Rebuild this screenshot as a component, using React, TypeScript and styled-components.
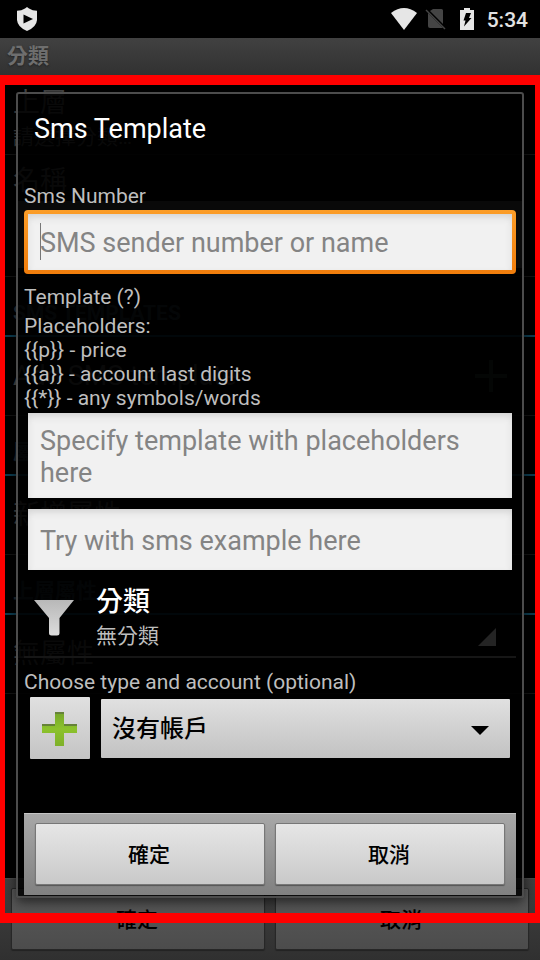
import React from "react";
import styled, { createGlobalStyle } from "styled-components";

const GlobalStyle = createGlobalStyle`
  *, *::before, *::after { box-sizing: border-box; }
  body { margin: 0; background: #000; }
  body, button, input, textarea, select {
    font-family: Roboto, "Noto Sans CJK TC", sans-serif;
  }
  h1, h2, p { margin: 0; font-weight: 400; }
`;

const Screen = styled.div`
  position: relative;
  display: flex;
  flex-direction: column;
  min-height: 100vh;
  background: #000;
  overflow: hidden;
`;

const StatusBar = styled.header`
  display: flex;
  align-items: center;
  height: 38px;
  padding: 0 12px 0 16px;
`;

const StatusIcons = styled.div`
  display: flex;
  align-items: center;
  gap: 8px;
  margin-left: auto;
`;

const Clock = styled.time`
  padding-top: 2px;
  font-size: 21px;
  line-height: 24px;
  font-weight: 500;
  color: #e2e2e2;
`;

const AppBar = styled.div`
  height: 40px;
  padding: 6px 7px;
  background: linear-gradient(#414141, #303030);
  color: #6e6e6e;
  font-size: 21px;
  line-height: 24px;
  font-weight: 700;
  text-shadow: 0 1px 2px #222;
`;

const Backdrop = styled.main`
  display: flex;
  flex-direction: column;
  flex: 1;
  padding: 5px 5px 0;
`;

const BackRow = styled.div<{ $height: number; $accent?: boolean }>`
  display: flex;
  flex-direction: column;
  justify-content: ${(p) => (p.$accent ? "flex-end" : "center")};
  height: ${(p) => p.$height}px;
  padding: 0 8px ${(p) => (p.$accent ? 4 : 0)}px;
  border-bottom: ${(p) => (p.$accent ? "2px solid #0c3c50" : "1px solid #141414")};
`;

const BackText = styled.span<{ $small?: boolean; $tone?: string }>`
  font-size: ${(p) => (p.$small ? 21 : 27)}px;
  line-height: ${(p) => (p.$small ? 32 : 36)}px;
  color: ${(p) => p.$tone ?? "#484848"};
`;

const BackHeading = styled(BackText)`
  font-size: 21px;
  font-weight: 700;
`;

const BackLine = styled.div`
  display: flex;
  align-items: center;
  justify-content: space-between;
  padding-right: 20px;
`;

const BackField = styled.div`
  height: 67px;
  margin: 2px 5px 0;
  background: #4a4a4a;
`;

const ButtonBar = styled.footer<{ $dim?: boolean }>`
  display: flex;
  gap: 10px;
  height: 82px;
  padding: 9px 11px 10px;
  border-top: 1px solid ${(p) => (p.$dim ? "#4a4a4a" : "#c4c4c4")};
  background: ${(p) =>
    p.$dim ? "linear-gradient(#414141, #303030)" : "linear-gradient(#a8a8a8, #808080)"};
`;

const BarButton = styled.button<{ $dim?: boolean }>`
  flex: 1;
  padding: 2px 2px 0 0;
  border: 1px solid ${(p) => (p.$dim ? "#272727" : "#777")};
  border-radius: 2px;
  background: ${(p) =>
    p.$dim ? "linear-gradient(#5a5a5a, #4c4c4c)" : "linear-gradient(#e6e6e6, #c9c9c9)"};
  box-shadow: 0 1px 1px ${(p) => (p.$dim ? "#222" : "#555")};
  color: #000;
  font-size: 21px;
  line-height: 24px;
  font-weight: 500;
`;

const Dialog = styled.section`
  position: absolute;
  top: 92px;
  left: 16px;
  right: 16px;
  padding: 0 6px 1px;
  border: 2px solid #4c4c4c;
  border-radius: 3px;
  background: rgba(0, 0, 0, 0.88);
  box-shadow: 0 4px 12px rgba(0, 0, 0, 0.6);
`;

const DialogTitle = styled.h1`
  padding: 19px 10px 39px;
  color: #fff;
  font-size: 27px;
  line-height: 32px;
`;

const Form = styled.form`
  display: flex;
  flex-direction: column;
`;

const FieldLabel = styled.label`
  color: #bebebe;
  font-size: 21px;
  line-height: 24px;
`;

const Hint = styled.p`
  margin: 5px 0 3px;
  color: #bebebe;
  font-size: 21px;
  line-height: 24px;
`;

const fieldFace = `
  display: block;
  border: 0;
  border-radius: 0;
  outline: 0;
  background-color: #f1f1f1;
  box-shadow: inset 0 4px 8px -2px #ccc;
  color: #000;
  font-size: 27px;
  line-height: 32px;
  &::placeholder { color: #848484; opacity: 1; }
`;

const FocusRing = styled.div`
  margin: 2px 0 11px;
  padding: 4px;
  border-radius: 4px;
  background: linear-gradient(#fb9d28, #f07d0c);
`;

const TextInput = styled.input<{ $focused?: boolean }>`
  ${fieldFace}
  width: 100%;
  height: 56px;
  padding: 2px 12px 0;
  ${(p) =>
    p.$focused &&
    `background-image: linear-gradient(#777, #777);
     background-repeat: no-repeat;
     background-size: 1px 37px;
     background-position: 12px 9px;`}
`;

const FieldGroup = styled.div`
  display: flex;
  flex-direction: column;
  gap: 11px;
  margin: 0 4px;
`;

const TextArea = styled.textarea`
  ${fieldFace}
  width: 100%;
  height: 85px;
  padding: 12px;
  resize: none;
  overflow: hidden;
`;

const SampleInput = styled(TextInput)`
  height: 61px;
`;

const CategoryRow = styled.button`
  display: flex;
  align-items: center;
  height: 88px;
  margin-bottom: 12px;
  padding: 10px 20px 0 8px;
  border: 0;
  border-bottom: 2px solid #161616;
  background: none;
  text-align: left;
`;

const CategoryText = styled.span`
  display: flex;
  flex: 1;
  flex-direction: column;
  margin-left: 20px;
`;

const CategoryName = styled.span`
  color: #fff;
  font-size: 27px;
  line-height: 36px;
  font-weight: 500;
`;

const CategoryValue = styled.span`
  color: #bebebe;
  font-size: 21px;
  line-height: 32px;
`;

const CornerMark = styled.svg`
  align-self: flex-end;
  margin-bottom: 10px;
`;

const AccountRow = styled.div`
  display: flex;
  align-items: center;
  gap: 11px;
  margin: 3px 6px 54px;
`;

const AddButton = styled.button`
  display: grid;
  place-items: center;
  width: 60px;
  height: 62px;
  padding: 2px 0 0;
  border: 0;
  border-radius: 1px;
  background: linear-gradient(#e0e0e0, #c4c4c4);
`;

const SelectBox = styled.div`
  position: relative;
  flex: 1;
`;

const AccountSelect = styled.select`
  display: block;
  width: 100%;
  height: 59px;
  padding: 2px 50px 0 11px;
  border: 0;
  border-radius: 1px;
  outline: 0;
  appearance: none;
  background: linear-gradient(#e0e0e0, #c2c2c2);
  color: #000;
  font-size: 24px;
  font-weight: 500;
`;

const SelectArrow = styled.svg`
  position: absolute;
  top: 27px;
  right: 21px;
  pointer-events: none;
`;

const Highlight = styled.div`
  position: absolute;
  top: 75px;
  left: 0;
  right: 0;
  bottom: 37px;
  border: solid #f00;
  border-width: 10px 5px;
  pointer-events: none;
`;

const ShieldIcon = () => (
  <svg width="22" height="26" viewBox="0 0 22 26" aria-hidden="true">
    <path d="M11 1 L13 2.4 Q16.500 4.500 21 4.800 V14 Q20.500 21 11 25 Q1.500 21 1 14 V4.800 Q5.500 4.500 9 2.400Z" fill="#e6e6e6" />
    <path d="M7.500 8.500 L17 13 L7.500 17.500Z" fill="#000" />
  </svg>
);

const WifiIcon = () => (
  <svg width="26" height="22" viewBox="0 0 26 22" aria-hidden="true">
    <path d="M0 5 Q13 -5 26 5 L13 22Z" fill="#e6e6e6" />
  </svg>
);

const NoSimIcon = () => (
  <svg width="22" height="22" viewBox="0 0 22 22" aria-hidden="true">
    <path d="M8 1 H16.500 Q18 1 18 2.500 V16 L5 3Z" fill="#444" />
    <path d="M3 5 L18 20 H5 Q3 20 3 18Z" fill="#444" />
    <path d="M1 2 L20 21" stroke="#444" strokeWidth="1.500" />
  </svg>
);

const BatteryIcon = () => (
  <svg width="24" height="24" viewBox="4 0 24 24" aria-hidden="true">
    <path d="M13 1 H19 V3 H23 V23 H9 V3 H13Z" fill="#e6e6e6" />
    <path d="M15 6 H20 L18 11 H20.500 L13 19.500 L14.500 13.500 H12.500Z" fill="#000" />
  </svg>
);

const FunnelIcon = () => (
  <svg width="44" height="38" viewBox="0 0 44 38" aria-hidden="true">
    <defs>
      <linearGradient id="funnel" x1="0" y1="0" x2="0" y2="1">
        <stop offset="0" stopColor="#b8b8b8" />
        <stop offset="1" stopColor="#dcdcdc" />
      </linearGradient>
    </defs>
    <path d="M2 1 H42 L27.500 19 V34 Q27.500 36.500 25 36.500 H19.500 Q17 36.500 17 34 V19Z" fill="url(#funnel)" />
  </svg>
);

const PlusIcon = () => (
  <svg width="36" height="36" viewBox="0 0 36 36" aria-hidden="true">
    <defs>
      <linearGradient id="plus" x1="0" y1="0" x2="0" y2="1">
        <stop offset="0" stopColor="#74a52a" />
        <stop offset="0.500" stopColor="#8cc22c" />
        <stop offset="1" stopColor="#7eb029" />
      </linearGradient>
    </defs>
    <path d="M13 1 H22 V13 H35 V22 H22 V35 H13 V22 H0 V13 H13Z" fill="url(#plus)" />
    <path d="M13 2 H22 M0 14 H13 M22 14 H35" stroke="#668238" strokeWidth="2" />
  </svg>
);

const FaintPlus = () => (
  <svg width="32" height="32" viewBox="0 0 32 32" aria-hidden="true">
    <path d="M16 0 V32 M0 16 H32" stroke="#20302f" strokeWidth="4" />
  </svg>
);

export default function App() {
  return (
    <Screen>
      <GlobalStyle />
      <StatusBar>
        <ShieldIcon />
        <StatusIcons>
          <WifiIcon />
          <NoSimIcon />
          <BatteryIcon />
          <Clock>5:34</Clock>
        </StatusIcons>
      </StatusBar>
      <AppBar>分類</AppBar>
      <Backdrop aria-hidden="true">
        <BackRow $height={72}>
          <BackText>上層</BackText>
          <BackText $small>請選擇分類…</BackText>
        </BackRow>
        <BackRow $height={122}>
          <BackText>名稱</BackText>
          <BackField />
        </BackRow>
        <BackRow $height={60} $accent>
          <BackHeading $tone="#26343c">SMS TEMPLATES</BackHeading>
        </BackRow>
        <BackRow $height={79}>
          <BackLine>
            <BackText>Add SMS template</BackText>
            <FaintPlus />
          </BackLine>
        </BackRow>
        <BackRow $height={60} $accent>
          <BackHeading $tone="#1e2a33">屬性</BackHeading>
        </BackRow>
        <BackRow $height={79}>
          <BackText>新增屬性</BackText>
        </BackRow>
        <BackRow $height={60} $accent>
          <BackHeading $tone="#1e2a33">上層屬性</BackHeading>
        </BackRow>
        <BackRow $height={79}>
          <BackText>無屬性</BackText>
        </BackRow>
      </Backdrop>
      <ButtonBar $dim>
        <BarButton $dim type="button" tabIndex={-1}>確定</BarButton>
        <BarButton $dim type="button" tabIndex={-1}>取消</BarButton>
      </ButtonBar>

      <Dialog role="dialog" aria-labelledby="dialog-title">
        <DialogTitle id="dialog-title">Sms Template</DialogTitle>
        <Form onSubmit={(e) => e.preventDefault()}>
          <FieldLabel htmlFor="sms-number">Sms Number</FieldLabel>
          <FocusRing>
            <TextInput $focused id="sms-number" placeholder="SMS sender number or name" />
          </FocusRing>
          <FieldLabel htmlFor="template">Template (?)</FieldLabel>
          <Hint>
            Placeholders:
            <br />
            {"{{p}} - price"}
            <br />
            {"{{a}} - account last digits"}
            <br />
            {"{{*}} - any symbols/words"}
          </Hint>
          <FieldGroup>
            <TextArea id="template" placeholder="Specify template with placeholders here" />
            <SampleInput aria-label="Sms example" placeholder="Try with sms example here" />
          </FieldGroup>
          <CategoryRow type="button">
            <FunnelIcon />
            <CategoryText>
              <CategoryName>分類</CategoryName>
              <CategoryValue>無分類</CategoryValue>
            </CategoryText>
            <CornerMark width="18" height="18" viewBox="0 0 18 18" aria-hidden="true">
              <path d="M18 0 V18 H0Z" fill="#242424" />
            </CornerMark>
          </CategoryRow>
          <FieldLabel htmlFor="account">Choose type and account (optional)</FieldLabel>
          <AccountRow>
            <AddButton type="button" aria-label="Add account">
              <PlusIcon />
            </AddButton>
            <SelectBox>
              <AccountSelect id="account">
                <option>沒有帳戶</option>
              </AccountSelect>
              <SelectArrow width="18" height="9" viewBox="0 0 18 9" aria-hidden="true">
                <path d="M0 0 H18 L9 9Z" fill="#000" />
              </SelectArrow>
            </SelectBox>
          </AccountRow>
          <ButtonBar>
            <BarButton type="submit">確定</BarButton>
            <BarButton type="button">取消</BarButton>
          </ButtonBar>
        </Form>
      </Dialog>
      <Highlight />
    </Screen>
  );
}
